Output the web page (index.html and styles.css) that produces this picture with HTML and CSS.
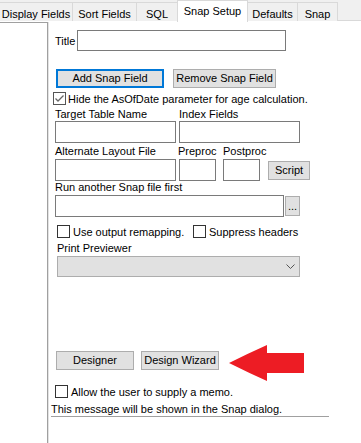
FILE: index.html
```html
<!DOCTYPE html>
<html>
<head>
<meta charset="utf-8">
<link rel="stylesheet" href="styles.css">
</head>
<body>
<div class="tabs">
  <div class="tab t-display">Display Fields</div>
  <div class="tab t-sort">Sort Fields</div>
  <div class="tab t-sql">SQL</div>
  <div class="tab active t-setup">Snap Setup</div>
  <div class="tab t-defaults">Defaults</div>
  <div class="tab t-snap">Snap</div>
</div>
<div class="main">
  <div class="list"></div>
  <div class="page">
    <div class="row r-title">
      <span class="lbl-title">Title</span>
      <span class="input in-title"></span>
    </div>
    <div class="row r-btn1">
      <button class="btn focus b-add">Add Snap Field</button>
      <button class="btn b-remove">Remove Snap Field</button>
    </div>
    <div class="row r-check">
      <span class="cb checked"><svg width="11" height="11" viewBox="0 0 11 11"><polyline points="1.5,5.5 4,8 9.5,2.5" fill="none" stroke="#666" stroke-width="1.3"/></svg></span>
      <span>Hide the AsOfDate parameter for age calculation.</span>
    </div>
    <div class="row r-lbl r-lbl1">
      <span class="l-target">Target Table Name</span>
      <span>Index Fields</span>
    </div>
    <div class="row r-in">
      <span class="input in-half"></span>
      <span class="input in-half"></span>
    </div>
    <div class="row r-lbl r-lbl2">
      <span class="l-alt">Alternate Layout File</span>
      <span class="l-pre">Preproc</span>
      <span>Postproc</span>
    </div>
    <div class="row r-in r-in2">
      <span class="input in-half"></span>
      <span class="input in-small"></span>
      <span class="input in-small in-post"></span>
      <button class="btn b-script">Script</button>
    </div>
    <div class="row r-lbl r-lbl3">
      <span>Run another Snap file first</span>
    </div>
    <div class="row r-in r-in3">
      <span class="input in-run"></span>
      <button class="btn b-dots">...</button>
    </div>
    <div class="row r-checks">
      <span class="cbg cbg1"><span class="cb"></span><span>Use output remapping.</span></span>
      <span class="cbg"><span class="cb"></span><span>Suppress headers</span></span>
    </div>
    <div class="row r-lbl r-lbl4">
      <span>Print Previewer</span>
    </div>
    <div class="row r-select">
      <span class="select"><svg class="chev" width="9" height="5" viewBox="0 0 9 5"><polyline points="0.5,0.5 4.5,4.5 8.5,0.5" fill="none" stroke="#555" stroke-width="1"/></svg></span>
    </div>
    <div class="row r-btn2">
      <button class="btn b-design">Designer</button>
      <button class="btn b-design">Design Wizard</button>
      <svg class="arrow" width="75" height="36" viewBox="0 0 75 36"><path d="M0 18 Q20 8 38 0 L38 8 L75 8 L75 28 L38 28 L38 36 Q20 28 0 18 Z" fill="#ed1c24"/></svg>
    </div>
    <div class="row r-memo">
      <span class="cbg cbg-memo"><span class="cb"></span><span>Allow the user to supply a memo.</span></span>
    </div>
    <div class="row r-msg">This message will be shown in the Snap dialog.</div>
  </div>
</div>
</body>
</html>
```

FILE: styles.css
```css
html, body {
  margin: 0;
  padding: 0;
}
body {
  width: 361px;
  height: 443px;
  overflow: hidden;
  background: #fff;
  color: #000;
  font-family: "Liberation Sans", Arial, sans-serif;
  font-size: 11px;
}

/* Tabs */
.tabs {
  display: flex;
  align-items: flex-start;
  height: 21px;
  background: #f0f0f0;
  border-bottom: 1px solid #d9d9d9;
  box-sizing: border-box;
}
.tab {
  box-sizing: border-box;
  margin-top: 2px;
  height: 19px;
  padding-top: 3px;
  line-height: 16px;
  text-align: center;
  white-space: nowrap;
  background: #f0f0f0;
  border-top: 1px solid #d9d9d9;
  border-right: 1px solid #d9d9d9;
}
.tab.active {
  margin-top: 0;
  height: 22px;
  padding-top: 2px;
  background: #fff;
  border-left: 1px solid #d9d9d9;
  margin-left: -1px;
  position: relative;
  z-index: 1;
}
.t-display { width: 73px; }
.t-sort { width: 64px; }
.t-sql { width: 41px; }
.t-setup { width: 71px; }
.t-defaults { width: 50px; }
.t-snap { width: 40px; }

/* Main area */
.main {
  display: flex;
  height: 422px;
}
.list {
  flex: none;
  width: 47px;
  margin-top: 1px;
  border-top: 1px solid #a0a0a0;
  border-right: 1px solid #a0a0a0;
  box-shadow: 1px 0 0 #e3e3e3;
}
.page {
  flex: 1;
  display: flex;
  flex-direction: column;
  padding-left: 7px;
}
.row {
  display: flex;
  align-items: center;
  white-space: nowrap;
}

.input {
  display: block;
  box-sizing: border-box;
  border: 1px solid #7a7a7a;
  background: #fff;
  height: 22px;
}
.btn {
  box-sizing: border-box;
  height: 19px;
  padding: 0;
  margin: 0;
  background: #e1e1e1;
  border: 1px solid #adadad;
  font: inherit;
  color: #000;
  line-height: 17px;
  text-align: center;
  white-space: nowrap;
}
.btn.focus {
  border: 2px solid #0078d7;
  line-height: 15px;
}

.cb {
  display: flex;
  align-items: center;
  justify-content: center;
  flex: none;
  box-sizing: border-box;
  width: 13px;
  height: 13px;
  border: 1px solid #333;
  background: #fff;
}
.cb.checked {
  border-color: #555;
}
.cbg {
  display: flex;
  align-items: center;
  gap: 3px;
}

/* Title */
.r-title {
  margin-top: 9px;
  gap: 2px;
  height: 21px;
}
.lbl-title { width: 20px; }
.in-title {
  width: 209px;
  height: 21px;
}

/* Snap field buttons */
.r-btn1 {
  margin-top: 18px;
  margin-left: 1px;
  gap: 9px;
}
.b-add { width: 108px; }
.b-remove { width: 103px; }

.r-check {
  margin-top: 4px;
  margin-left: -2px;
  gap: 2px;
  height: 13px;
}

.r-lbl {
  height: 13px;
  line-height: 13px;
}
.r-lbl1 { margin-top: 3px; }
.l-target { width: 124px; }
.r-in {
  gap: 3px;
  height: 22px;
}
.in-half { width: 121px; }

.r-lbl2 { margin-top: 2px; }
.l-alt { width: 123px; }
.l-pre { width: 45px; }
.r-in2 { margin-top: 1px; }
.in-small { width: 37px; }
.in-post { margin-left: 4px; }
.b-script {
  width: 42px;
  margin-left: 5px;
}

.r-lbl3 { margin-top: 0; }
.r-in3 {
  margin-top: 1px;
  gap: 1px;
}
.in-run { width: 229px; }
.b-dots {
  width: 15px;
  height: 20px;
  line-height: 18px;
}

.r-checks {
  margin-top: 8px;
  margin-left: 2px;
  height: 13px;
}
.cbg1 { width: 136px; }

.r-lbl4 {
  margin-top: 4px;
  margin-left: 2px;
}
.r-select {
  margin-top: 1px;
  margin-left: 2px;
}
.select {
  box-sizing: border-box;
  width: 243px;
  height: 21px;
  background: #e1e1e1;
  border: 1px solid #adadad;
  display: flex;
  align-items: center;
  justify-content: flex-end;
  padding-right: 4px;
}

.r-btn2 {
  margin-top: 74px;
  margin-left: 1px;
  align-items: flex-start;
  gap: 7px;
}
.b-design { width: 78px; }
.arrow {
  flex: none;
  margin: -6px 0 -17px 3px;
}

.r-memo {
  margin-top: 15px;
  height: 13px;
}
.r-msg {
  margin-top: 5px;
  margin-left: -4px;
  width: 278px;
  height: 13px;
  line-height: 13px;
  border-bottom: 1px solid #a0a0a0;
}
```
